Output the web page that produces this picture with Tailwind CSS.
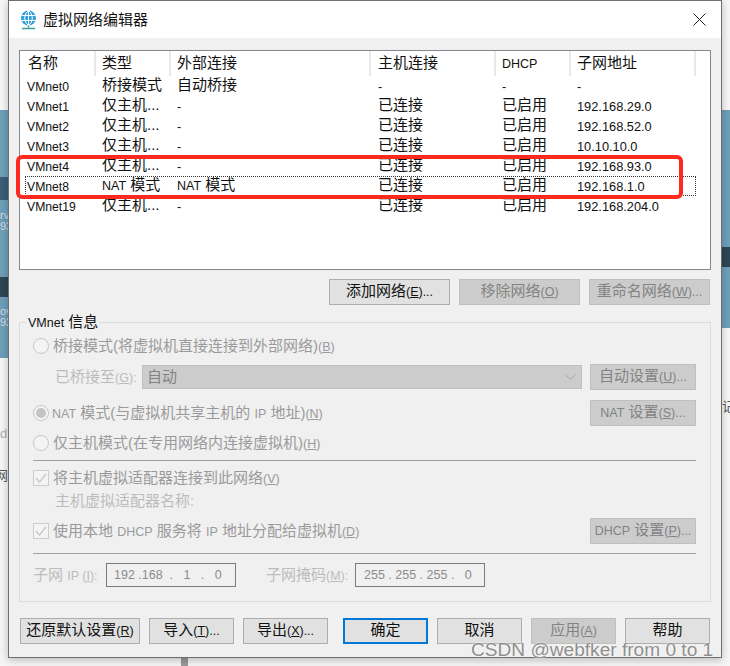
<!DOCTYPE html>
<html lang="zh-CN">
<head>
    <meta charset="UTF-8">
    <title>虚拟网络编辑器</title>
    <script src="https://cdn.jsdelivr.net/npm/@tailwindcss/browser@4"></script>
</head>
<body class="bg-[#f6f6f6] font-['Liberation_Sans','Noto_Sans_CJK_SC',sans-serif] text-[15px] leading-[20px] text-[#111]">
<div class="relative w-[730px] h-[666px] overflow-hidden">
    <!-- Desktop behind the dialog -->
    <div class="absolute left-0 top-[110px] w-[8px] h-[248px] bg-[#6f9fba]"></div>
    <div class="absolute right-0 top-[110px] w-[8px] h-[218px] bg-[#6f9fba]"></div>
    <div class="absolute left-0 top-[177px] w-[8px] h-[23px] bg-[#3b5f78]"></div>
    <div class="absolute left-0 top-[277px] w-[8px] h-[20px] bg-[#2f4656]"></div>
    <div class="absolute right-0 top-[247px] w-[8px] h-[20px] bg-[#2f4656]"></div>
    <span class="absolute left-0 top-[210px] w-[8px] overflow-hidden text-[11px] leading-[11px] text-[#d5dde3]">rv 93</span>
    <span class="absolute left-0 top-[306px] w-[8px] overflow-hidden text-[11px] leading-[11px] text-[#d5dde3]">ov 92</span>
    <span class="absolute left-0 top-[424px] w-[8px] overflow-hidden text-[13px] text-[#b0b0b0]">d</span>
    <span class="absolute left-[-5px] top-[466px] text-[13px] text-[#555]">网</span>
    <span class="absolute left-[722px] top-[397px] text-[13px] text-[#555]">记</span>
    <div class="absolute left-[181px] top-[657px] w-[7px] h-[9px] bg-[#9a9a9a]"></div>

    <!-- Dialog -->
    <div class="relative ml-[8px] w-[714px] h-[658px] border border-[#6e6e6e] bg-[#f0f0f0] shadow-[0_2px_8px_rgba(0,0,0,0.25)] flex flex-col [&_button]:pb-[2px]">
        <!-- Title bar -->
        <div class="h-[37px] shrink-0 bg-white flex items-center pl-[11px] pr-[15px]">
            <svg class="w-[17px] h-[20px] shrink-0" viewBox="0 0 17 20" fill="none">
                <circle cx="8.5" cy="8" r="7.5" fill="#2f9fe0"/>
                <path d="M1.5 5.5h14M1.5 10.5h14M8.5 0.5v15M8.5 0.5c-5 4-5 11 0 15M8.5 0.5c5 4 5 11 0 15" stroke="#fff" stroke-width="1"/>
                <path d="M8.5 15.5v2M2 18.5h13" stroke="#3f9f9a" stroke-width="1.5"/>
            </svg>
            <span class="ml-[6px]">虚拟网络编辑器</span>
            <svg class="ml-auto w-[13px] h-[13px]" viewBox="0 0 13 13" fill="none"><path d="M0.5 0.5l12 12M12.5 0.5l-12 12" stroke="#222" stroke-width="1"/></svg>
        </div>

        <div class="flex flex-col pl-[10px] pr-[10px]">
            <!-- Network list -->
            <div class="relative mt-[12px] h-[220px] border border-[#828790] bg-white">
                <div class="grid grid-cols-[76px_75px_200px_125px_75px_125px] h-[25px]">
                    <span class="pl-[8px] pb-[2px] border-r-2 border-[#e8e8e8] flex items-center">名称</span>
                    <span class="pl-[6px] pb-[2px] border-r-2 border-[#e8e8e8] flex items-center">类型</span>
                    <span class="pl-[6px] pb-[2px] border-r-2 border-[#e8e8e8] flex items-center">外部连接</span>
                    <span class="pl-[7px] pb-[2px] border-r-2 border-[#e8e8e8] flex items-center">主机连接</span>
                    <span class="pl-[6px] border-r-2 border-[#e8e8e8] flex items-center text-[12.5px]">DHCP</span>
                    <span class="pl-[6px] pb-[2px] border-r-2 border-[#e8e8e8] flex items-center">子网地址</span>
                </div>
                <div class="ml-[7px] grid grid-cols-[75px_75px_201px_124px_75px_1fr] auto-rows-[20px] items-center [&>span:not([class])]:-translate-y-px [&>span[class]]:translate-y-px">
                    <span class="text-[12.2px]">VMnet0</span><span>桥接模式</span><span>自动桥接</span><span class="text-[12.5px]">-</span><span class="text-[12.5px]">-</span><span class="text-[12.5px]">-</span>
                    <span class="text-[12.2px]">VMnet1</span><span>仅主机...</span><span class="text-[12.5px]">-</span><span>已连接</span><span>已启用</span><span class="text-[12.8px]">192.168.29.0</span>
                    <span class="text-[12.2px]">VMnet2</span><span>仅主机...</span><span class="text-[12.5px]">-</span><span>已连接</span><span>已启用</span><span class="text-[12.8px]">192.168.52.0</span>
                    <span class="text-[12.2px]">VMnet3</span><span>仅主机...</span><span class="text-[12.5px]">-</span><span>已连接</span><span>已启用</span><span class="text-[12.8px]">10.10.10.0</span>
                    <span class="text-[12.2px]">VMnet4</span><span>仅主机...</span><span class="text-[12.5px]">-</span><span>已连接</span><span>已启用</span><span class="text-[12.8px]">192.168.93.0</span>
                    <span class="text-[12.2px]">VMnet8</span><span><span class="text-[12.5px]">NAT</span> 模式</span><span><span class="text-[12.5px]">NAT</span> 模式</span><span>已连接</span><span>已启用</span><span class="text-[12.8px]">192.168.1.0</span>
                    <span class="text-[12.2px]">VMnet19</span><span>仅主机...</span><span class="text-[12.5px]">-</span><span>已连接</span><span>已启用</span><span class="text-[12.8px]">192.168.204.0</span>
                </div>
                <!-- Focus rectangle on the selected row -->
                <div class="absolute left-[5px] top-[125px] w-[671px] h-[20px] border border-dotted border-[#333]"></div>
                <!-- Red annotation -->
                <div class="absolute left-[-4px] top-[104px] w-[667px] h-[44px] border-4 border-[#ff2a1f] rounded-[6px]"></div>
            </div>

            <!-- List actions -->
            <div class="mt-[9px] flex justify-end gap-[9px] pr-[1px]">
                <button class="w-[121px] h-[26px] bg-[#e1e1e1] border border-[#adadad]">添加网络<span class="text-[12.5px]">(<u>E</u>)...</span></button>
                <button class="w-[121px] h-[26px] bg-[#cccccc] border border-[#bfbfbf] text-[#838383]">移除网络<span class="text-[12.5px]">(<u>O</u>)</span></button>
                <button class="w-[121px] h-[26px] bg-[#cccccc] border border-[#bfbfbf] text-[#838383]">重命名网络<span class="text-[12.5px]">(<u>W</u>)...</span></button>
            </div>

            <!-- VMnet info group -->
            <div class="relative mt-[17px] h-[280px] border border-[#dcdcdc] pl-[13px] pr-[14px] pt-[13px] text-[#9a9a9a]">
                <span class="absolute left-[7px] top-[-11px] px-[1px] bg-[#f0f0f0] text-[#111]"><span class="text-[12.5px]">VMnet</span> 信息</span>

                <div class="h-[20px] flex items-center">
                    <span class="w-[16px] h-[16px] rounded-full border border-[#c8c8c8] bg-[#f4f4f4]"></span>
                    <span class="ml-[4px]">桥接模式(将虚拟机直接连接到外部网络)<span class="text-[12.5px]">(<u>B</u>)</span></span>
                </div>
                <div class="mt-[8px] h-[26px] flex items-center">
                    <span class="ml-[22px] w-[87px] text-[#bcbcbc] whitespace-nowrap">已桥接至<span class="text-[12.5px]">(<u>G</u>):</span></span>
                    <div class="w-[440px] h-[24px] bg-[#cccccc] border border-[#bfbfbf] flex items-center pl-[4px] pr-[5px] text-[#838383]">
                        <span>自动</span>
                        <svg class="ml-auto w-[11px] h-[6px]" viewBox="0 0 11 6" fill="none"><path d="M0.5 0.5l5 5 5-5" stroke="#a5a5a5"/></svg>
                    </div>
                    <button class="ml-[8px] w-[106px] h-[26px] bg-[#cccccc] border border-[#bfbfbf] text-[#838383]">自动设置<span class="text-[12.5px]">(<u>U</u>)...</span></button>
                </div>
                <div class="mt-[10px] h-[26px] flex items-center">
                    <span class="w-[16px] h-[16px] rounded-full border border-[#c8c8c8] bg-[#f4f4f4] flex items-center justify-center"><span class="w-[10px] h-[10px] rounded-full bg-[#c4c4c4]"></span></span>
                    <span class="ml-[3px]"><span class="text-[12.5px]">NAT</span> 模式(与虚拟机共享主机的 <span class="text-[12.5px]">IP</span> 地址)<span class="text-[12.5px]">(<u>N</u>)</span></span>
                    <button class="ml-auto w-[106px] h-[26px] bg-[#cccccc] border border-[#bfbfbf] text-[#838383]"><span class="text-[12.5px]">NAT</span> 设置<span class="text-[12.5px]">(<u>S</u>)...</span></button>
                </div>
                <div class="mt-[7px] h-[20px] flex items-center">
                    <span class="w-[16px] h-[16px] rounded-full border border-[#c8c8c8] bg-[#f4f4f4]"></span>
                    <span class="ml-[4px]">仅主机模式(在专用网络内连接虚拟机)<span class="text-[12.5px]">(<u>H</u>)</span></span>
                </div>
                <div class="mt-[7px] h-px bg-[#a0a0a0]"></div>
                <div class="mt-[7px] h-[20px] flex items-center">
                    <span class="w-[16px] h-[16px] border border-[#cdcdcd] bg-[#f4f4f4] flex items-center justify-center">
                        <svg class="w-[12px] h-[10px]" viewBox="0 0 12 10" fill="none"><path d="M1 5l3.5 4L11 1" stroke="#c8c8c8" stroke-width="1.3"/></svg>
                    </span>
                    <span class="ml-[4px]">将主机虚拟适配器连接到此网络<span class="text-[12.5px]">(<u>V</u>)</span></span>
                </div>
                <div class="mt-[3px] h-[20px] flex items-center">
                    <span class="ml-[22px] text-[#bcbcbc]">主机虚拟适配器名称:</span>
                </div>
                <div class="mt-[7px] h-[26px] flex items-center">
                    <span class="w-[16px] h-[16px] border border-[#cdcdcd] bg-[#f4f4f4] flex items-center justify-center">
                        <svg class="w-[12px] h-[10px]" viewBox="0 0 12 10" fill="none"><path d="M1 5l3.5 4L11 1" stroke="#c8c8c8" stroke-width="1.3"/></svg>
                    </span>
                    <span class="ml-[4px]">使用本地 <span class="text-[12.5px]">DHCP</span> 服务将 <span class="text-[12.5px]">IP</span> 地址分配给虚拟机<span class="text-[12.5px]">(<u>D</u>)</span></span>
                    <button class="ml-auto w-[106px] h-[26px] bg-[#cccccc] border border-[#bfbfbf] text-[#838383]"><span class="text-[12.5px]">DHCP</span> 设置<span class="text-[12.5px]">(<u>P</u>)...</span></button>
                </div>
                <div class="mt-[9px] h-px bg-[#a0a0a0]"></div>
                <div class="mt-[9px] h-[24px] flex items-center text-[#bcbcbc]">
                    <span class="w-[73px] whitespace-nowrap">子网 <span class="text-[12.5px]">IP (<u>I</u>):</span></span>
                    <div class="w-[130px] h-[24px] border border-[#7a7a7a] flex items-center pl-[7px] text-[12.5px] text-[#8c8c8c] whitespace-pre">192 .168  .   1   .   0</div>
                    <span class="ml-[30px] w-[89px] whitespace-nowrap">子网掩码<span class="text-[12.5px]">(<u>M</u>):</span></span>
                    <div class="w-[130px] h-[24px] border border-[#7a7a7a] flex items-center pl-[8px] text-[12.5px] text-[#8c8c8c] whitespace-pre">255 . 255 . 255 .   0</div>
                </div>
            </div>

            <!-- Dialog actions -->
            <div class="mt-[16px] flex items-center pl-[1px]">
                <button class="w-[120px] h-[26px] bg-[#e1e1e1] border border-[#adadad] whitespace-nowrap">还原默认设置<span class="text-[12.5px]">(<u>R</u>)</span></button>
                <button class="ml-[9px] w-[85px] h-[26px] bg-[#e1e1e1] border border-[#adadad]">导入<span class="text-[12.5px]">(<u>T</u>)...</span></button>
                <button class="ml-[9px] w-[85px] h-[26px] bg-[#e1e1e1] border border-[#adadad]">导出<span class="text-[12.5px]">(<u>X</u>)...</span></button>
                <button class="ml-[15px] w-[85px] h-[26px] bg-[#e1e1e1] border-2 border-[#0078d7]">确定</button>
                <button class="ml-[9px] w-[85px] h-[26px] bg-[#e1e1e1] border border-[#adadad]">取消</button>
                <button class="ml-[9px] w-[85px] h-[26px] bg-[#cccccc] border border-[#bfbfbf] text-[#838383]">应用<span class="text-[12.5px]">(<u>A</u>)</span></button>
                <button class="ml-[9px] w-[85px] h-[26px] bg-[#e1e1e1] border border-[#adadad]">帮助</button>
            </div>
        </div>
    </div>

    <!-- Watermark -->
    <span class="absolute left-[471px] top-[638px] text-[19.1px] leading-[24px] text-[#8f8f8f] whitespace-nowrap [text-shadow:0_0_2px_#fff]">CSDN @webfker from 0 to 1</span>
</div>
</body>
</html>
